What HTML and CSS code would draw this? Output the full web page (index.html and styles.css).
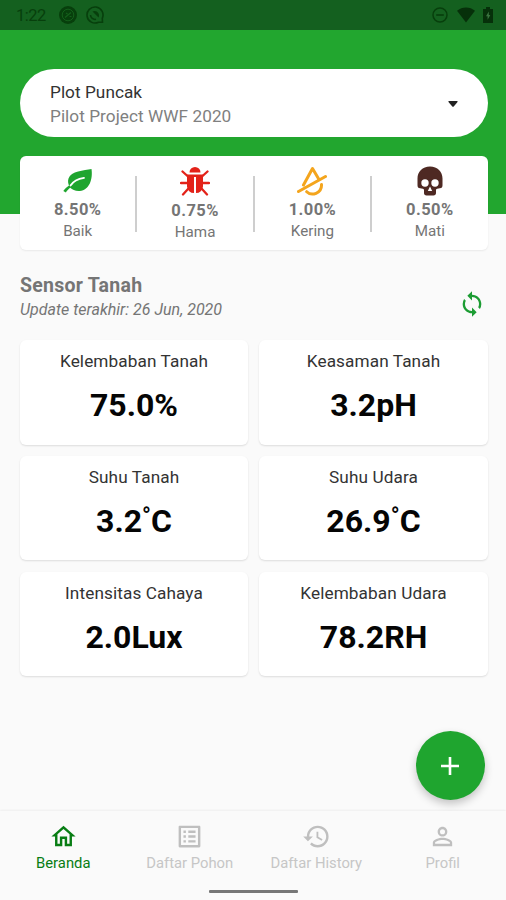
FILE: index.html
```html
<!DOCTYPE html>
<html lang="id">
<head>
<meta charset="utf-8">
<title>Beranda</title>
<link rel="stylesheet" href="styles.css">
</head>
<body>
<div class="app">
  <header class="hero">
    <div class="status">
      <span class="clock">1:22</span>
      <svg class="st-app" width="18" height="18" viewBox="0 0 18 18"><circle cx="9" cy="9" r="9" fill="#073f0c"/><circle cx="9" cy="9" r="5.8" fill="none" stroke="#14601b" stroke-width="1"/><path d="M6 11.5 12 6.5M7 7l1.5 1M10.5 10.5h2" stroke="#14601b" stroke-width="1.2"/></svg>
      <svg class="st-sync" width="18" height="18" viewBox="0 0 18 18" fill="none" stroke="#073f0c"><path d="M12.500 16.200A8 8 0 1 1 16.300 12.300L16.500 16.200Z" stroke-width="1.600"/><path d="M4.500 9a4.500 4.500 0 0 0 5.500 4.300" stroke-width="1.500"/><path d="M6.500 5.500C10 3.500 14.500 7 12.500 11.500Z" fill="#073f0c" stroke="none"/></svg>
      <span class="spacer"></span>
      <svg class="st-dnd" width="16" height="16" viewBox="0 0 16 16" fill="none" stroke="#073f0c"><circle cx="8" cy="8" r="7" stroke-width="1.500"/><path d="M4.200 8h7.600" stroke-width="1.700"/></svg>
      <svg class="st-wifi" width="18" height="16" viewBox="0 0 18 16"><path d="M0 3.800C5-.7 13-.7 18 3.800L9 15.500Z" fill="#06300a"/></svg>
      <svg class="st-batt" width="10" height="16" viewBox="0 0 10 16"><path d="M3 0h4v2h3v14H0V2h3Z" fill="#06300a"/><path d="M5.800 4.500 3 9.300h1.600v3.400L7.300 8H5.800Z" fill="#3b7540"/></svg>
    </div>
    <div class="picker">
      <div>
        <div class="plot">Plot Puncak</div>
        <div class="project">Pilot Project WWF 2020</div>
      </div>
      <svg class="caret" width="10" height="6" viewBox="0 0 10 6"><path d="M.5 0h9v1L5.500 5.800h-1L.5 1Z" fill="#222"/></svg>
    </div>
  </header>

  <section class="stats">
    <div class="stat">
      <svg width="30" height="26" viewBox="0 0 30 26"><path d="M28.500 1C21 2.500 8 3 5.500 10.500c-.9 2.700-.3 5.300.5 7C3.800 18.900 1.700 20.900.3 23.100L2.900 24.500c1.100-1.900 2.600-3.400 4.300-4.700 2.300 2 5.200 3.500 9.600 3.200C26.500 22 30 11 28.500 1Z" fill="#1fa52f"/><path d="M7.500 17.500C10 13.500 14 10.800 21 9.800" fill="none" stroke="#fff" stroke-width="1.800" stroke-linecap="round"/></svg>
      <b>8.50%</b><span>Baik</span>
    </div>
    <i class="rule"></i>
    <div class="stat hama">
      <svg width="30" height="30" viewBox="0 0 30 30"><path d="M9.500 6.500a5.500 5.500 0 0 1 11 0Z" fill="#e32219"/><path d="M7 8.500h16v12a7 7 0 0 1-7 6.500h-2a7 7 0 0 1-7-6.500Z" fill="#e32219"/><path d="M2.500 5.500 8 10.500M27.500 5.500 22 10.500M1 17H8M29 17H22M8 23l-5 5.500M22 23l5 5.500" stroke="#e32219" stroke-width="2.300" stroke-linecap="round"/><path d="M15 11v16" stroke="#fff" stroke-width="2"/></svg>
      <b>0.75%</b><span>Hama</span>
    </div>
    <i class="rule"></i>
    <div class="stat">
      <svg width="30" height="30" viewBox="0 0 30 30" fill="none" stroke="#f4a51d" stroke-width="3" stroke-linecap="round" stroke-linejoin="round"><path d="M6.500 19 15.500 2.500 22 13.500M1.500 25.500 28.500 10.500M24.500 18.500c.5 9-10 12-14.800 7.200"/></svg>
      <b>1.00%</b><span>Kering</span>
    </div>
    <i class="rule"></i>
    <div class="stat">
      <svg width="26" height="30" viewBox="0 0 26 30"><path d="M13 .5C5.500.5.500 5.500.500 12.500v6.700c0 2 .8 2.800 2.700 3.100l2.600.4c.9.2 1.200.7 1.200 1.600v2.700c0 1.600.9 2.500 2.500 2.500h7c1.600 0 2.500-.9 2.500-2.500v-2.700c0-.9.300-1.400 1.200-1.600l2.600-.4c1.900-.3 2.700-1.100 2.700-3.100v-6.700C25.500 5.500 20.500.5 13 .5Z" fill="#4e2923"/><circle cx="8" cy="17" r="3.700" fill="#fff"/><circle cx="18" cy="17" r="3.700" fill="#fff"/><path d="M13 20.500 15.200 25h-4.400Z" fill="#fff"/></svg>
      <b>0.50%</b><span>Mati</span>
    </div>
  </section>

  <section class="heading">
    <div><h1>Sensor Tanah</h1><p>Update terakhir: 26 Jun, 2020</p></div>
    <svg class="refresh" width="28" height="28" viewBox="0 0 24 24" fill="#1c9c33"><path d="M12 4V1L8 5l4 4V6c3.310 0 6 2.690 6 6 0 1.010-.25 1.970-.7 2.800l1.460 1.460A7.930 7.930 0 0 0 20 12c0-4.420-3.580-8-8-8zm0 14c-3.310 0-6-2.690-6-6 0-1.010.25-1.970.7-2.800L5.240 7.740A7.930 7.930 0 0 0 4 12c0 4.420 3.580 8 8 8v3l4-4-4-4v3z"/></svg>
  </section>

  <section class="grid">
    <div class="card"><span>Kelembaban Tanah</span><b>75.0%</b></div>
    <div class="card"><span>Keasaman Tanah</span><b>3.2pH</b></div>
    <div class="card"><span>Suhu Tanah</span><b class="temp">3.2<em>°</em>C</b></div>
    <div class="card"><span>Suhu Udara</span><b class="temp">26.9<em>°</em>C</b></div>
    <div class="card"><span>Intensitas Cahaya</span><b>2.0Lux</b></div>
    <div class="card"><span>Kelembaban Udara</span><b>78.2RH</b></div>
  </section>

  <button class="fab" aria-label="Tambah"><svg width="18" height="18" viewBox="0 0 18 18"><path d="M9 0v18M0 9h18" stroke="#fff" stroke-width="2.600"/></svg></button>

  <nav class="nav">
    <div class="tab active">
      <svg width="29" height="29" viewBox="0 0 24 24"><path d="M12 5.690l5 4.500V18h-2v-6H9v6H7v-7.810l5-4.500M12 3L2 12h3v8h6v-6h2v6h6v-8h3L12 3z"/></svg>
      <span>Beranda</span>
    </div>
    <div class="tab">
      <svg width="29" height="29" viewBox="0 0 24 24"><path d="M11 7h6v2h-6zm0 4h6v2h-6zm0 4h6v2h-6zM7 7h2v2H7zm0 4h2v2H7zm0 4h2v2H7zM20.100 3H3.900c-.5 0-.9.4-.9.9v16.200c0 .4.4.9.9.9h16.200c.4 0 .9-.5.9-.9V3.900c0-.5-.5-.9-.9-.9zM19 19H5V5h14v14z"/></svg>
      <span>Daftar Pohon</span>
    </div>
    <div class="tab">
      <svg width="29" height="29" viewBox="0 0 24 24"><path d="M13 3a9 9 0 0 0-9 9H1l3.890 3.890.07.140L9 12H6c0-3.870 3.130-7 7-7s7 3.130 7 7-3.130 7-7 7c-1.930 0-3.680-.79-4.940-2.060l-1.420 1.420A8.954 8.954 0 0 0 13 21a9 9 0 0 0 0-18zm-1 5v5l4.280 2.540.72-1.210-3.500-2.080V8H12z"/></svg>
      <span>Daftar History</span>
    </div>
    <div class="tab">
      <svg width="29" height="29" viewBox="0 0 24 24"><path d="M12 5.900a2.100 2.100 0 1 1 0 4.200 2.100 2.100 0 0 1 0-4.200m0 9c2.970 0 6.100 1.460 6.100 2.100v1.100H5.900V17c0-.64 3.130-2.100 6.100-2.100M12 4C9.790 4 8 5.790 8 8s1.790 4 4 4 4-1.790 4-4-1.790-4-4-4zm0 9c-2.670 0-8 1.340-8 4v3h16v-3c0-2.660-5.330-4-8-4z"/></svg>
      <span>Profil</span>
    </div>
    <i class="gesture"></i>
  </nav>
</div>
</body>
</html>
```
FILE: styles.css
```css
* { box-sizing: border-box; margin: 0; padding: 0; }
body { background: #fafafa; font-family: Roboto, "Liberation Sans", sans-serif; }
.app { width: 506px; height: 900px; display: flex; flex-direction: column; position: relative; overflow: hidden; }
svg { display: block; flex: none; }
.spacer { flex: 1; }

.hero { height: 214px; background: #22a62f; flex: none; }
.status { height: 30px; background: #14601f; display: flex; align-items: center; padding: 0 13px 0 16px; }
.clock { font-size: 16.5px; line-height: 30px; width: 43px; color: #073f0c; letter-spacing: -.5px; padding-top: 1px; }
.st-sync { margin-left: 9px; }
.st-wifi { margin-left: 9px; }
.st-batt { margin-left: 8px; }
.picker { margin: 39px 18.5px 0 20px; height: 68px; border-radius: 34px; background: #fff; display: flex; justify-content: space-between; align-items: center; padding: 2px 30px 0; }
.plot, .project { font-size: 17.2px; line-height: 24px; letter-spacing: .05px; }
.plot { color: #333; }
.project { color: #808080; }

.stats { margin: -58px 18.5px 0 20px; height: 94px; border-radius: 6px; background: #fff; display: flex; flex: none; box-shadow: 0 1px 2px rgba(0,0,0,.07); }
.stat { flex: 1; display: flex; flex-direction: column; align-items: center; padding-top: 10px; color: #757575; }
.stat svg { height: 30px; }
.stat b { font-size: 16.5px; line-height: 20px; font-weight: 700; letter-spacing: .4px; margin-top: 4px; }
.stat span { font-size: 15.2px; line-height: 20px; margin-top: 1px; }
.hama b { margin-top: 5px; }
.rule { width: 2px; height: 56px; margin-top: 20px; background: #cecece; }

.heading { display: flex; justify-content: space-between; margin: 24px 20px 0 20px; height: 66px; flex: none; color: #757575; }
.heading h1 { font-size: 19.5px; line-height: 24px; font-weight: 700; letter-spacing: .25px; }
.heading p { font-size: 16px; line-height: 22px; font-style: italic; margin-top: 1px; }
.refresh { margin-top: 16px; }

.grid { display: grid; grid-template-columns: 228px 229px; grid-template-rows: repeat(3, 104.500px); column-gap: 11px; row-gap: 11.300px; margin-left: 20px; }
.card { background: #fff; border-radius: 6px; box-shadow: 0 1px 2px rgba(0,0,0,.12); display: flex; flex-direction: column; align-items: center; padding-top: 9px; }
.card span { font-size: 17.2px; line-height: 24px; color: #333; letter-spacing: .1px; }
.card b { font-size: 32px; line-height: 40px; font-weight: 700; color: #050505; margin-top: 12px; }
.card .temp { display: flex; }
.card em { font-style: normal; font-size: 23px; font-weight: 700; line-height: 32px; }

.fab { position: absolute; right: 21.5px; top: 731px; width: 69px; height: 69px; border: 0; border-radius: 50%; background: #1fa52f; display: flex; align-items: center; justify-content: center; box-shadow: 0 4px 8px rgba(0,0,0,.22); }

.nav { margin-top: auto; height: 89px; display: flex; position: relative; box-shadow: 0 -1px 2px rgba(0,0,0,.05); background: #fafafa; flex: none; }
.tab { flex: 1; display: flex; flex-direction: column; align-items: center; padding-top: 11px; fill: #bfbfbf; color: #c6c6c6; font-size: 14.8px; line-height: 18px; }
.tab span { margin-top: 3px; }
.active { fill: #087d14; color: #087d14; }
.gesture { position: absolute; left: 209px; bottom: 7px; width: 89px; height: 3px; background: #777; border-radius: 1px; }
```
